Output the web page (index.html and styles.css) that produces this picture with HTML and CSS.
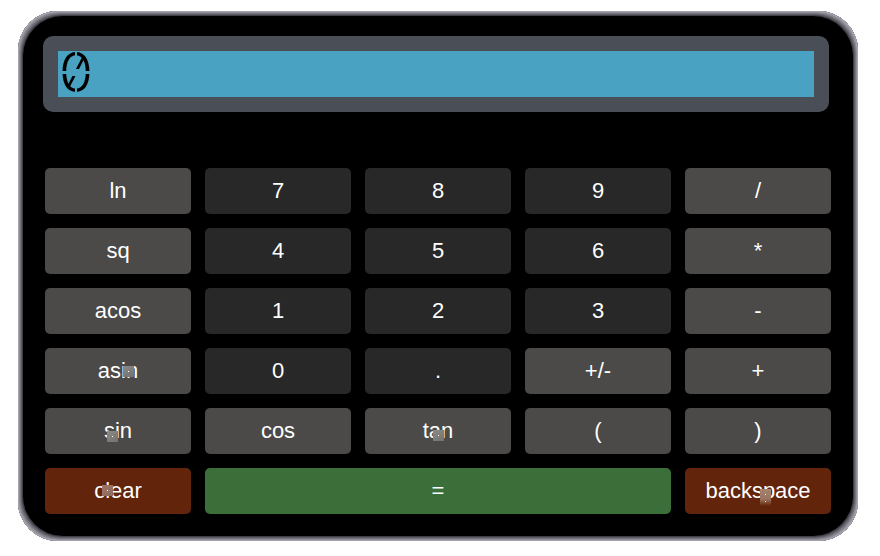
FILE: index.html
```
<!DOCTYPE html>
<html lang="en">
<head>
<meta charset="utf-8">
<title>Calculator</title>
<link rel="stylesheet" href="styles.css">
</head>
<body>
<main class="calculator">
  <div class="display"><div class="screen"><span class="digit">0</span></div></div>
  <div class="keys">
    <button class="key">ln</button><button class="key num">7</button><button class="key num">8</button><button class="key num">9</button><button class="key">/</button>
    <button class="key">sq</button><button class="key num">4</button><button class="key num">5</button><button class="key num">6</button><button class="key">*</button>
    <button class="key">acos</button><button class="key num">1</button><button class="key num">2</button><button class="key num">3</button><button class="key">-</button>
    <button class="key">asin<i class="mark mark-asin"></i></button><button class="key num">0</button><button class="key num">.</button><button class="key">+/-</button><button class="key">+</button>
    <button class="key">sin<i class="mark mark-sin"></i></button><button class="key">cos</button><button class="key">tan<i class="mark mark-tan"></i></button><button class="key">(</button><button class="key">)</button>
    <button class="key danger">clear<i class="mark mark-clear"></i></button><button class="key equals">=</button><button class="key danger">backspace<i class="mark mark-back"></i></button>
  </div>
</main>
</body>
</html>
```
FILE: styles.css
```
* { box-sizing: border-box; }
body { margin: 0; background: #fff; font-family: "Liberation Sans", Arial, sans-serif; }
.calculator {
  width: 840px;
  height: 530px;
  margin: 11px 0 0 18px;
  padding: 25px 27px 27px 25px;
  border-radius: 40px;
  background: #000;
  /* bevel: one shade per pixel, shifted toward each corner */
  box-shadow:
    inset 1px 1px #a5a4ae, inset -1px -1px #a5a4ae, inset 1px -1px #a5a4ae, inset -1px 1px #a5a4ae,
    inset 2px 2px #8d8c96, inset -2px -2px #8d8c96, inset 2px -2px #8d8c96, inset -2px 2px #8d8c96,
    inset 3px 3px #75747d, inset -3px -3px #75747d, inset 3px -3px #75747d, inset -3px 3px #75747d,
    inset 4px 4px #5c5c64, inset -4px -4px #5c5c64, inset 4px -4px #5c5c64, inset -4px 4px #5c5c64,
    inset 5px 5px #3e3e44, inset -5px -5px #3e3e44, inset 5px -5px #3e3e44, inset -5px 5px #3e3e44;
}
.display {
  width: 786px;
  height: 76px;
  padding: 15px;
  border-radius: 10px;
  background: #4a4e57;
}
.screen { height: 46px; background: #49a2c1; }
.digit {
  position: relative;
  display: block;
  width: 36px;
  height: 46px;
  font: 300 55px/43px Inter, sans-serif;
  font-feature-settings: "zero" 1;
  text-align: center;
  color: #000;
}
.digit::after {
  content: "";
  position: absolute;
  inset: 0;
  background:
    linear-gradient(#49a2c1, #49a2c1) 17px 0 / 2px 7px no-repeat,
    linear-gradient(#49a2c1, #49a2c1) 17px 36px / 2px 8px no-repeat,
    linear-gradient(#49a2c1, #49a2c1) 10px 18px / 16px 7px no-repeat,
    linear-gradient(#49a2c1, #49a2c1) 0 20px / 36px 3px no-repeat;
}
.keys {
  display: grid;
  grid-template-columns: repeat(5, 146px);
  grid-auto-rows: 46px;
  gap: 14px;
  margin: 56px 0 0 2px;
}
.key {
  position: relative;
  padding: 0;
  border: 0;
  border-radius: 5px;
  background: #4b4a48;
  color: #fff;
  font: 22px/46px "Liberation Sans", Arial, sans-serif;
  text-align: center;
}
.num { background: #282828; }
.danger { background: #62240b; }
.equals { grid-column: span 3; background: #3c6e39; }
.mark {
  position: absolute;
  width: 11px;
  height: 11px;
  background:
    linear-gradient(#fff, #fff) 5px 5px / 1px 1px no-repeat,
    linear-gradient(150deg, #8b8a86, #73726f);
}
.mark-asin { left: 78px; top: 18px; }
.mark-sin { left: 62px; top: 23px; }
.mark-tan { left: 68px; top: 22px; }
.mark-clear { left: 57px; top: 17px; }
.mark-back { left: 75px; top: 21px; height: 17px; }
.mark-clear {
  background:
    linear-gradient(#fff, #fff) 5px 5px / 1px 1px no-repeat,
    linear-gradient(150deg, #a07466, #8c6d60);
}
.mark-back {
  background:
    linear-gradient(#fff, #fff) 5px 5px / 1px 1px no-repeat,
    linear-gradient(#fff, #fff) 5px 12px / 1px 1px no-repeat,
    linear-gradient(#a4836f, #9b735f 60%, #62240b);
}
```
